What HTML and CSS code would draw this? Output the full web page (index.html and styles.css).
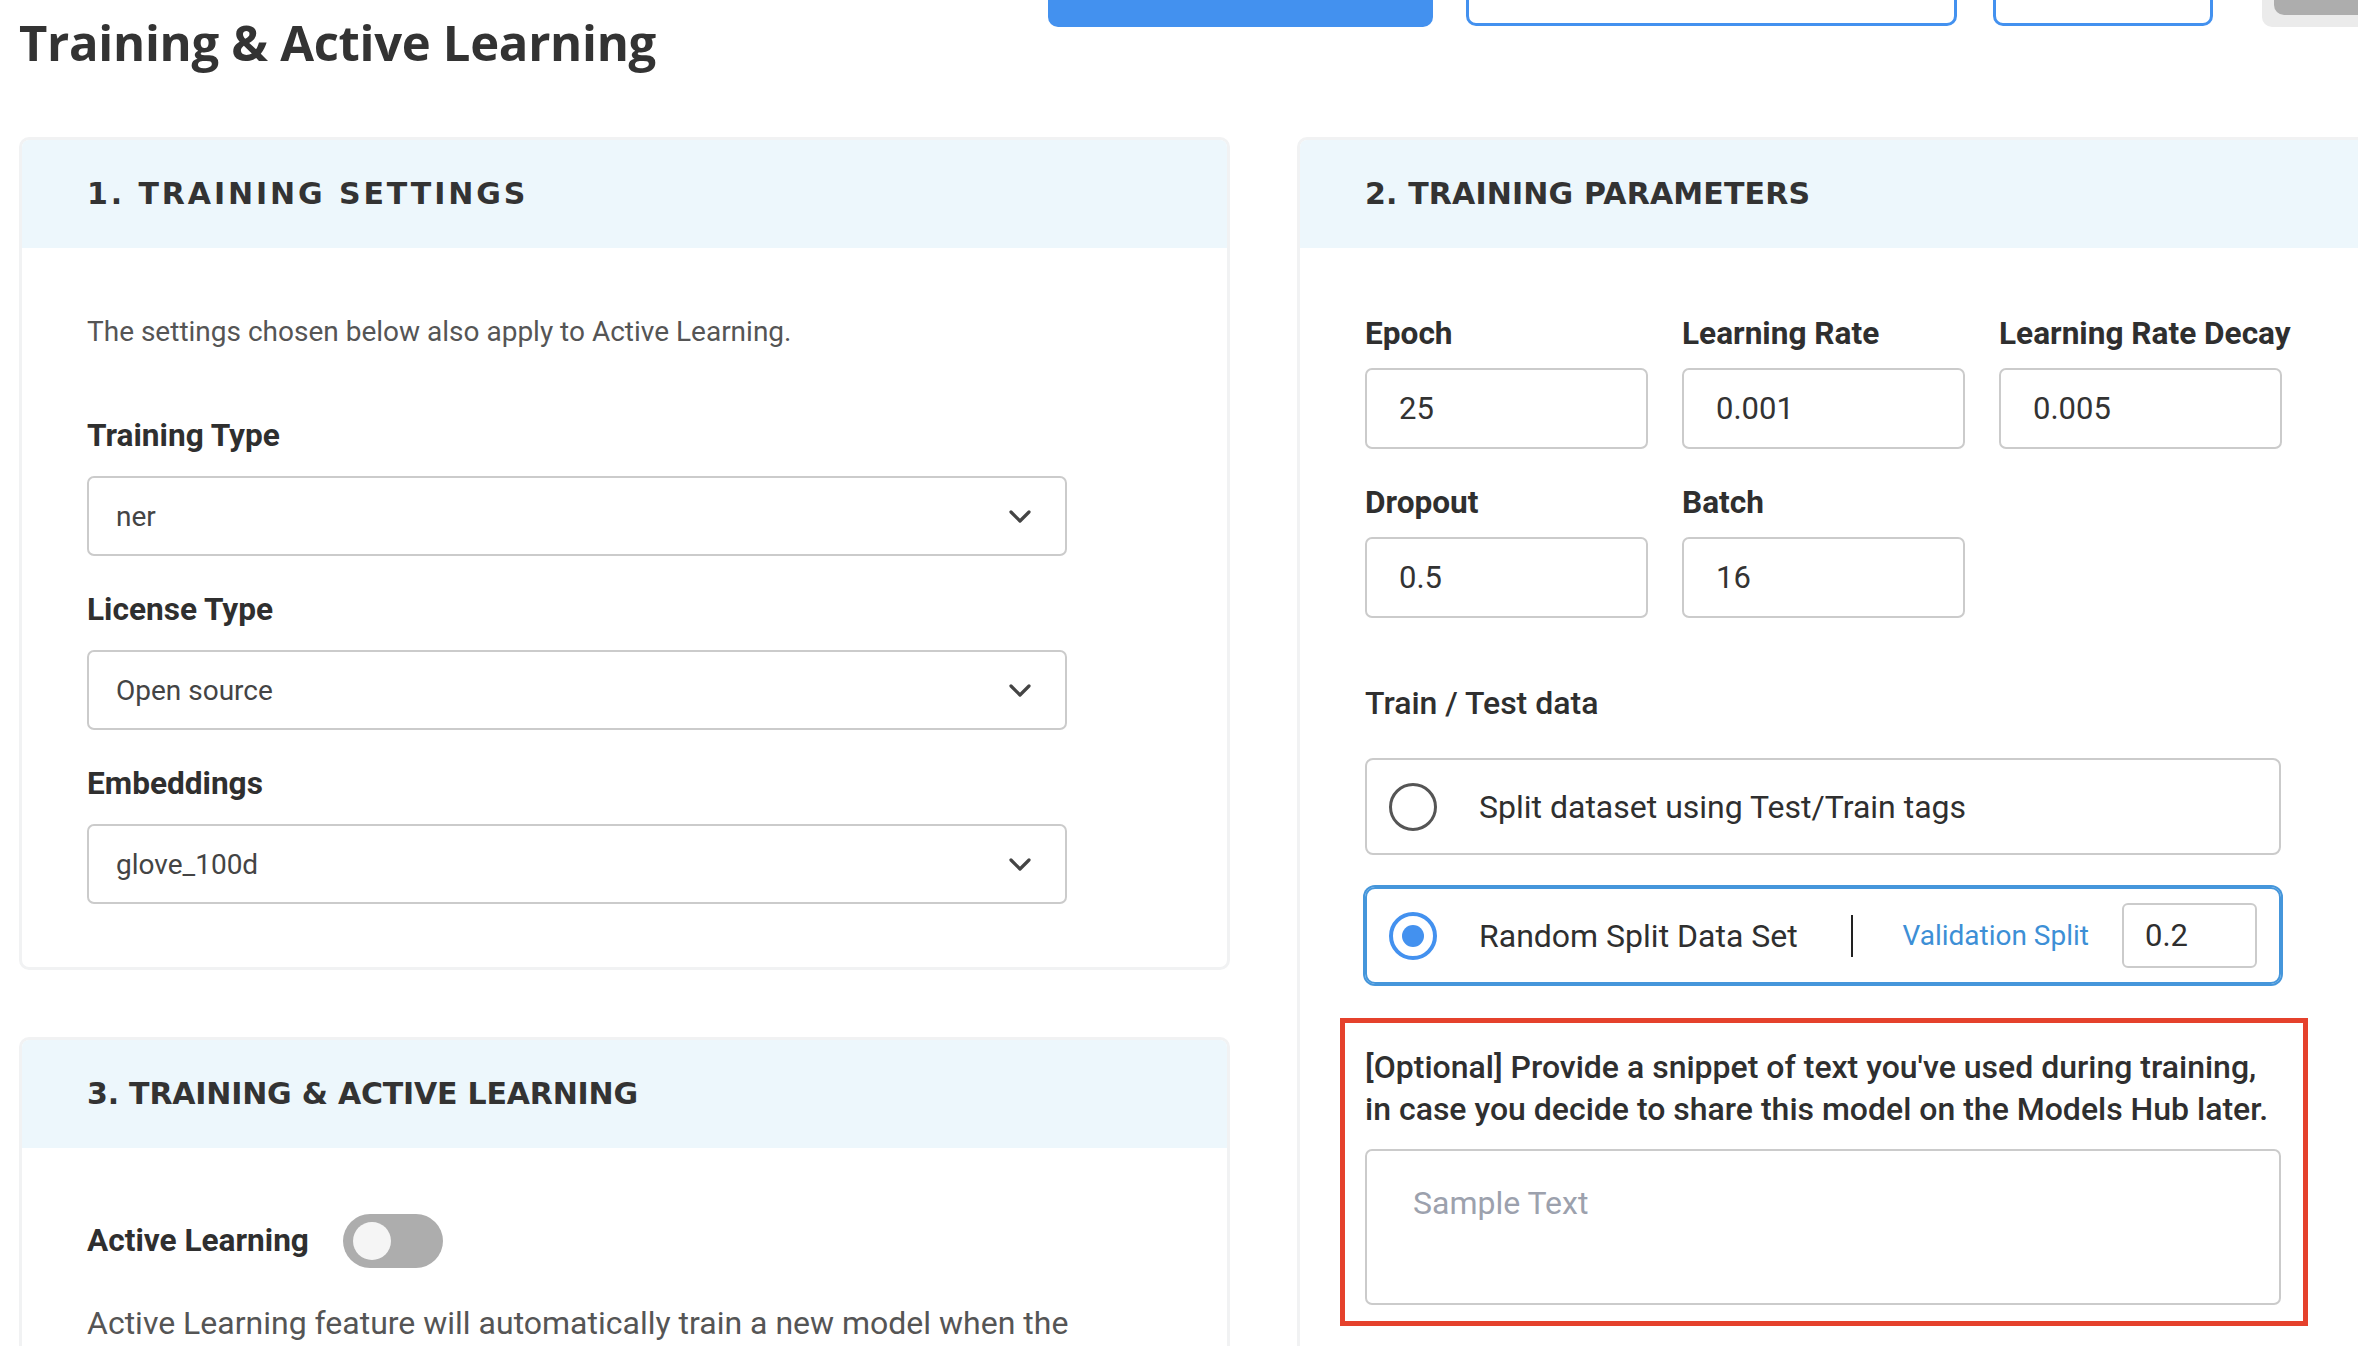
FILE: index.html
```html
<!DOCTYPE html>
<html lang="en">
<head>
<meta charset="utf-8">
<title>Training &amp; Active Learning</title>
<link rel="stylesheet" href="styles.css">
</head>
<body>
<div class="page">
  <header class="topbar">
    <h1 class="page-title">Training &amp; Active Learning</h1>
    <div class="actions">
      <div class="btn btn-primary btn-a"></div>
      <div class="btn btn-outline btn-b"></div>
      <div class="btn btn-outline btn-c"></div>
      <div class="mode-switch"><span class="mode-pill"></span></div>
    </div>
  </header>

  <main class="grid">
    <div class="col">
      <section class="card">
        <div class="card-head"><h2 class="card-title spaced">1. TRAINING SETTINGS</h2></div>
        <div class="card-body settings-body">
          <p class="desc">The settings chosen below also apply to Active Learning.</p>
          <div class="field">
            <div class="label">Training Type</div>
            <div class="select"><span class="select-value">ner</span>
              <svg class="chev" width="22" height="13" viewBox="0 0 22 13"><polyline points="2,2 11,11 20,2" fill="none" stroke="#444" stroke-width="3.2" stroke-linecap="round" stroke-linejoin="round"/></svg>
            </div>
          </div>
          <div class="field">
            <div class="label">License Type</div>
            <div class="select"><span class="select-value">Open source</span>
              <svg class="chev" width="22" height="13" viewBox="0 0 22 13"><polyline points="2,2 11,11 20,2" fill="none" stroke="#444" stroke-width="3.2" stroke-linecap="round" stroke-linejoin="round"/></svg>
            </div>
          </div>
          <div class="field">
            <div class="label">Embeddings</div>
            <div class="select"><span class="select-value">glove_100d</span>
              <svg class="chev" width="22" height="13" viewBox="0 0 22 13"><polyline points="2,2 11,11 20,2" fill="none" stroke="#444" stroke-width="3.2" stroke-linecap="round" stroke-linejoin="round"/></svg>
            </div>
          </div>
        </div>
      </section>

      <section class="card">
        <div class="card-head"><h2 class="card-title">3. TRAINING &amp; ACTIVE LEARNING</h2></div>
        <div class="card-body active-body">
          <div class="toggle-row">
            <div class="label">Active Learning</div>
            <span class="toggle"><span class="knob"></span></span>
          </div>
          <p class="active-desc">Active Learning feature will automatically train a new model when the</p>
        </div>
      </section>
    </div>

    <div class="col">
      <section class="card">
        <div class="card-head"><h2 class="card-title tight">2. TRAINING PARAMETERS</h2></div>
        <div class="card-body params-body">
          <div class="param-grid">
            <div class="param"><div class="label">Epoch</div><div class="num-input">25</div></div>
            <div class="param"><div class="label">Learning Rate</div><div class="num-input">0.001</div></div>
            <div class="param"><div class="label">Learning Rate Decay</div><div class="num-input">0.005</div></div>
            <div class="param"><div class="label">Dropout</div><div class="num-input">0.5</div></div>
            <div class="param"><div class="label">Batch</div><div class="num-input">16</div></div>
          </div>

          <div class="label-md">Train / Test data</div>
          <div class="option">
            <span class="radio"></span>
            <span class="option-text">Split dataset using Test/Train tags</span>
          </div>
          <div class="option option-selected">
            <span class="radio radio-on"><span class="radio-dot"></span></span>
            <span class="option-text">Random Split Data Set</span>
            <span class="divider"></span>
            <span class="split-label">Validation Split</span>
            <div class="split-input">0.2</div>
          </div>

          <div class="highlight">
            <p class="snippet-text">[Optional] Provide a snippet of text you've used during training,<br>in case you decide to share this model on the Models Hub later.</p>
            <div class="textarea"><span class="placeholder">Sample Text</span></div>
          </div>
        </div>
      </section>
    </div>
  </main>
</div>
</body>
</html>
```

FILE: styles.css
```css
html, body {
  margin: 0;
  padding: 0;
  background: #ffffff;
  overflow: hidden;
}

body {
  font-family: Roboto, "Liberation Sans", sans-serif;
  color: #333333;
}

.page {
  padding-left: 19px;
  width: 2600px;
}

/* ---------- top bar ---------- */
.topbar {
  display: flex;
  align-items: flex-start;
  padding-top: 12px;
  height: 60px;
}

.page-title {
  flex: 0 0 1029px;
  margin: 0;
  font-family: "Open Sans", sans-serif;
  font-weight: 700;
  font-size: 49px;
  line-height: 60px;
  color: #333333;
  letter-spacing: -0.3px;
}

.actions {
  display: flex;
  align-items: flex-start;
  margin-top: -52px;
}

.btn {
  height: 67px;
  box-sizing: border-box;
  border-radius: 10px;
}

.btn-primary {
  background: #4391ef;
}

.btn-outline {
  border: 3px solid #4391ef;
  background: #ffffff;
  height: 66px;
}

.btn-a { width: 385px; }
.btn-b { width: 491px; margin-left: 33px; }
.btn-c { width: 220px; margin-left: 36px; }

.mode-switch {
  margin-left: 49px;
  width: 120px;
  height: 67px;
  background: #ebebeb;
  border-radius: 10px;
  position: relative;
}

.mode-pill {
  position: absolute;
  left: 12px;
  top: 0;
  width: 110px;
  height: 55px;
  background: #adadad;
  border-radius: 10px;
}

/* ---------- grid ---------- */
.grid {
  display: grid;
  grid-template-columns: 1211px 1211px;
  column-gap: 67px;
  margin-top: 65px;
  align-items: start;
}

.col {
  display: flex;
  flex-direction: column;
  gap: 67px;
}

.card {
  border: 3px solid #f1f2f3;
  border-radius: 10px;
  background: #ffffff;
  overflow: hidden;
}

.card-head {
  height: 108px;
  background: #edf7fc;
  display: flex;
  align-items: center;
  padding: 0 65px;
}

.card-title {
  margin: 0;
  font-family: "DejaVu Sans", sans-serif;
  font-weight: 700;
  font-size: 30px;
  line-height: 40px;
  color: #333333;
  letter-spacing: -0.2px;
}

.card-title.spaced {
  letter-spacing: 2.9px;
}

.card-title.tight {
  letter-spacing: 0.15px;
}

.card-body {
  padding: 0 65px;
}

/* ---------- labels ---------- */
.label {
  font-weight: 700;
  font-size: 31.6px;
  line-height: 40px;
  color: #2f2f2f;
  white-space: nowrap;
}

.label-md {
  font-weight: 500;
  font-size: 32px;
  line-height: 40px;
  color: #2f2f2f;
  margin-top: 65px;
}

/* ---------- settings card ---------- */
.settings-body {
  padding-top: 64px;
  padding-bottom: 63px;
}

.desc {
  margin: 0;
  font-size: 28px;
  line-height: 40px;
  color: #555555;
}

.settings-body .desc + .field {
  margin-top: 64px;
}

.field + .field {
  margin-top: 34px;
}

.select {
  margin-top: 20px;
  width: 980px;
  height: 80px;
  box-sizing: border-box;
  border: 2px solid #cbcbcb;
  border-radius: 7px;
  display: flex;
  align-items: center;
  justify-content: space-between;
  padding: 0 34px 0 27px;
}

.select-value {
  font-size: 28px;
  color: #444444;
}

.chev {
  display: block;
}

/* ---------- active learning card ---------- */
.active-body {
  padding-top: 66px;
  padding-bottom: 40px;
}

.toggle-row {
  display: flex;
  align-items: center;
  gap: 34px;
}

.toggle {
  width: 100px;
  height: 54px;
  border-radius: 27px;
  background: #adadad;
  display: flex;
  align-items: center;
  padding-left: 10px;
  box-sizing: border-box;
}

.knob {
  width: 38px;
  height: 38px;
  border-radius: 50%;
  background: #f5f5f5;
}

.active-desc {
  margin: 33px 0 0;
  font-size: 32px;
  line-height: 44px;
  color: #555555;
}

/* ---------- params card ---------- */
.params-body {
  padding-top: 66px;
  padding-bottom: 60px;
}

.param-grid {
  display: grid;
  grid-template-columns: 283px 283px 283px;
  column-gap: 34px;
  row-gap: 34px;
  width: 917px;
}

.num-input {
  margin-top: 14px;
  height: 81px;
  box-sizing: border-box;
  border: 2px solid #cbcbcb;
  border-radius: 7px;
  display: flex;
  align-items: center;
  padding-left: 32px;
  font-size: 31px;
  color: #333333;
}

.option {
  width: 916px;
  height: 97px;
  box-sizing: border-box;
  border: 2px solid #cbcbcb;
  border-radius: 8px;
  display: flex;
  align-items: center;
  padding: 0 22px;
  margin-top: 35px;
}

.option-selected {
  margin-top: 32px;
  border-color: #4596db;
  border-radius: 10px;
  box-shadow: 0 0 0 2px #4596db;
}

.radio {
  flex: 0 0 auto;
  width: 48px;
  height: 48px;
  box-sizing: border-box;
  border-radius: 50%;
  border: 3.5px solid #555555;
  display: flex;
  align-items: center;
  justify-content: center;
}

.radio-on {
  border: 4px solid #4391ef;
}

.radio-dot {
  width: 22px;
  height: 22px;
  border-radius: 50%;
  background: #4391ef;
}

.option-text {
  margin-left: 42px;
  font-size: 32px;
  color: #2f2f2f;
}

.divider {
  margin-left: auto;
  width: 2px;
  height: 42px;
  background: #222222;
}

.split-label {
  margin-left: 49px;
  font-size: 28px;
  color: #3d8fd6;
}

.split-input {
  margin-left: 33px;
  width: 135px;
  height: 65px;
  box-sizing: border-box;
  border: 2px solid #cbcbcb;
  border-radius: 6px;
  display: flex;
  align-items: center;
  padding-left: 21px;
  font-size: 31px;
  color: #2f2f2f;
}

/* ---------- highlighted snippet area ---------- */
.highlight {
  margin: 34px 0 0 -25px;
  width: 968px;
  box-sizing: border-box;
  border: 5px solid #e5412c;
  padding: 23px 22px 16px 20px;
}

.snippet-text {
  margin: 0;
  font-weight: 500;
  font-size: 32px;
  line-height: 42px;
  color: #2f2f2f;
  white-space: nowrap;
}

.textarea {
  margin-top: 19px;
  width: 916px;
  height: 156px;
  box-sizing: border-box;
  border: 2px solid #cbcbcb;
  border-radius: 7px;
  padding: 32px 46px;
}

.placeholder {
  font-size: 32px;
  line-height: 40px;
  color: #9ca1ad;
}
```
